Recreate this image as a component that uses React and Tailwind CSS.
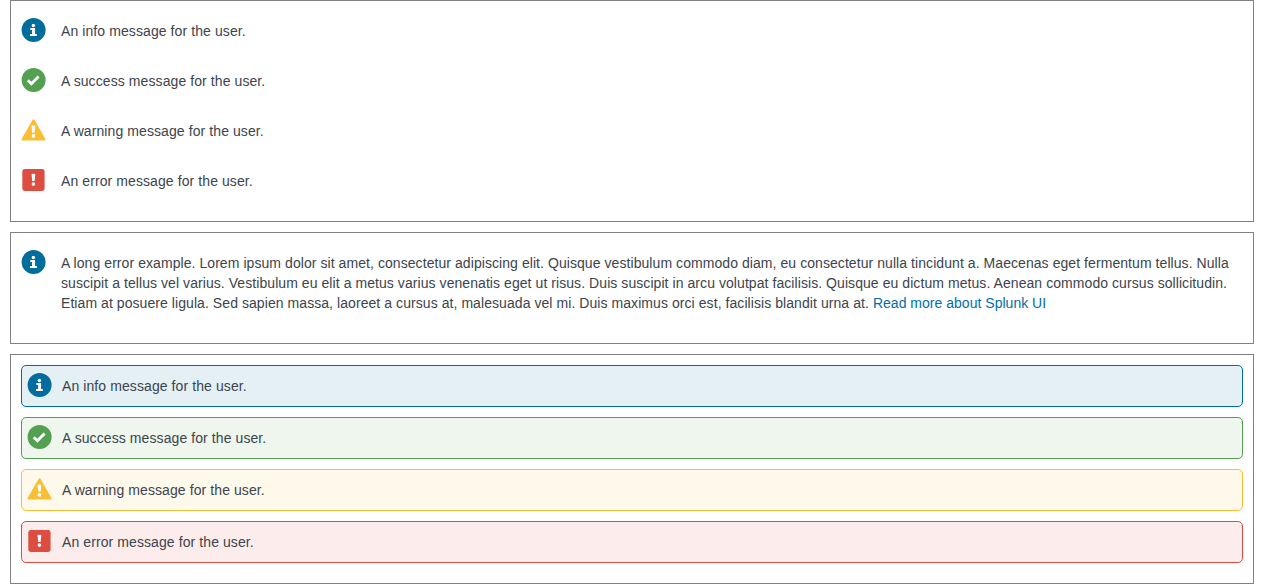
const icons = {
  info: (
    <>
      <circle cx="12" cy="12" r="12" fill="#006d9c" />
      <circle cx="11.8" cy="7.4" r="1.75" fill="#fff" />
      <path fill="#fff" d="M8.7 10h4.8v6h1.7v2H8.4v-2h2.1v-4.1H8.7z" />
    </>
  ),
  success: (
    <>
      <circle cx="12" cy="12" r="12" fill="#53a051" />
      <path d="M6.2 12.2l3.6 3.6 7.2-7.3" fill="none" stroke="#fff" strokeWidth="2.8" />
    </>
  ),
  warning: (
    <>
      <path fill="#f8be34" d="M10.9 2q1.1-1.4 2.1 0l10.8 18.9q.6 1.4-.9 1.5H1q-1.5-.1-.9-1.5z" />
      <path fill="#fff" d="M9.9 7.8q1.9-.7 3.8 0l-.7 7h-2.4z" />
      <circle cx="11.8" cy="17.9" r="1.85" fill="#fff" />
    </>
  ),
  error: (
    <>
      <rect x="0.7" y="1" width="22.3" height="22" rx="2.4" fill="#dc4e41" />
      <path fill="#fff" d="M9.9 6q1.9-.7 3.8 0l-.7 7.1h-2.4z" />
      <circle cx="11.8" cy="16.1" r="1.8" fill="#fff" />
    </>
  ),
};

const boxes = {
  info: 'border-[#006d9c] bg-[#e5f0f5]',
  success: 'border-[#53a051] bg-[#eef6ee]',
  warning: 'border-[#f8be34] bg-[#fff9eb]',
  error: 'border-[#dc4e41] bg-[#fcedec]',
};

const messages = [
  ['info', 'An info message for the user.'],
  ['success', 'A success message for the user.'],
  ['warning', 'A warning message for the user.'],
  ['error', 'An error message for the user.'],
];

function Message({ type, filled, children }) {
  return (
    <div
      className={`mb-2.5 flex items-start ${
        filled ? `rounded-[5px] border pl-[5px] pr-2.5 ${boxes[type]}` : ''
      }`}
    >
      <svg viewBox="-0.6 0 25 24" className="mt-[7px] h-6 w-[25px] shrink-0" aria-hidden="true">
        {icons[type]}
      </svg>
      <p className={`py-2.5 ${filled ? 'pl-2.5' : 'pl-[15px]'}`}>{children}</p>
    </div>
  );
}

function Panel({ children }) {
  return <section className="border border-[#808080] p-2.5">{children}</section>;
}

export default function App() {
  return (
    <main className="flex flex-col gap-2.5 bg-white px-2.5 font-['Liberation_Sans',Arial,sans-serif] text-[14px] leading-5 tracking-[0.09px] text-[#3c444d]">
      <Panel>
        {messages.map(([type, text]) => (
          <Message key={type} type={type}>{text}</Message>
        ))}
      </Panel>
      <Panel>
        <Message type="info">
          <span className="tracking-[0.067px]">
            A long error example. Lorem ipsum dolor sit amet, consectetur adipiscing elit. Quisque
            vestibulum commodo diam, eu consectetur nulla tincidunt a. Maecenas eget fermentum
            tellus. Nulla suscipit a tellus vel varius. Vestibulum eu elit a metus varius venenatis
            eget ut risus. Duis suscipit in arcu volutpat facilisis. Quisque eu dictum metus. Aenean
            commodo cursus sollicitudin. Etiam at posuere ligula. Sed sapien massa, laoreet a cursus
            at, malesuada vel mi. Duis maximus orci est, facilisis blandit urna at.{' '}
            <a href="#" className="tracking-[0.02px] text-[#006eaa]">Read more about Splunk UI</a>
          </span>
        </Message>
      </Panel>
      <Panel>
        {messages.map(([type, text]) => (
          <Message key={type} type={type} filled>{text}</Message>
        ))}
      </Panel>
    </main>
  );
}
